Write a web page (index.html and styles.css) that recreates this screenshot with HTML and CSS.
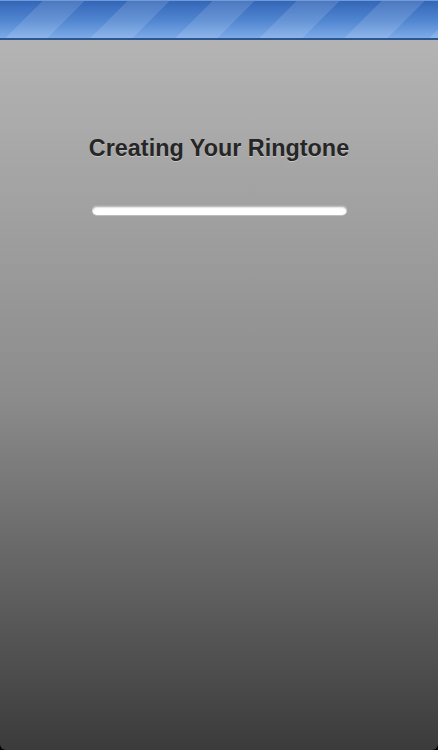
FILE: index.html
```html
<!DOCTYPE html>
<html>
<head>
<meta charset="utf-8">
<link rel="stylesheet" href="styles.css">
</head>
<body>
<div class="screen">
  <header class="topbar"></header>
  <main class="panel">
    <h1 class="title">Creating Your Ringtone</h1>
    <div class="progress"></div>
  </main>
</div>
</body>
</html>
```
FILE: styles.css
```css
html, body {
  margin: 0;
  padding: 0;
  background: #000;
}
.screen {
  width: 438px;
  height: 750px;
  display: flex;
  flex-direction: column;
  overflow: hidden;
  border-radius: 0 0 6px 6px;
}
.topbar {
  height: 37px;
  flex: none;
  border-top: 1px solid #6f9bd6;
  border-bottom: 2px solid #2d558f;
  background:
    repeating-linear-gradient(135deg,
      rgba(255,255,255,0) 0px,
      rgba(255,255,255,0) 30px,
      rgba(255,255,255,0.12) 30px,
      rgba(255,255,255,0.12) 60px),
    linear-gradient(to bottom, #3466b8 0%, #5287d1 55%, #7eabe8 100%);
}
.panel {
  flex: 1;
  display: flex;
  flex-direction: column;
  align-items: center;
  background: linear-gradient(to bottom, #b4b4b4 0%, #8c8c8c 50%, #3b3b3b 100%);
}
.title {
  margin: 94px 0 0;
  font-family: "Liberation Sans", Arial, sans-serif;
  font-weight: bold;
  font-size: 23.4px;
  line-height: 28px;
  color: #262626;
  text-shadow: 0 1px 0 rgba(255,255,255,0.35);
}
.progress {
  margin-top: 43px;
  width: 255px;
  height: 10px;
  border-radius: 5px;
  background: #fff;
  box-shadow: inset 0 2px 2px rgba(0,0,0,0.35), 0 1px 0 rgba(255,255,255,0.3);
}
```
